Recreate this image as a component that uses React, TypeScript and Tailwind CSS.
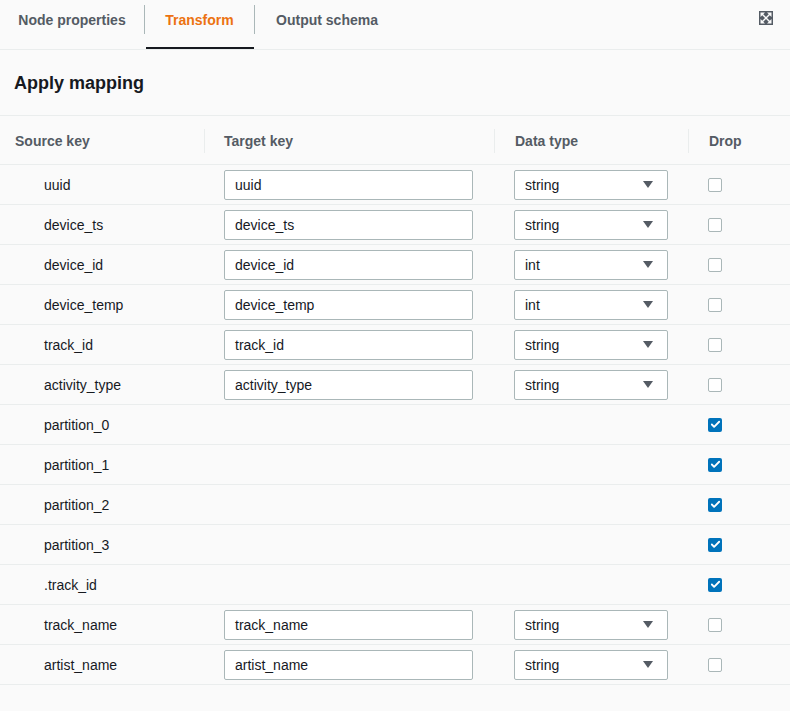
import { Check } from "lucide-react";

type Row = {
  source: string;
  target?: string;
  type?: string;
  drop: boolean;
};

const ROWS: Row[] = [
  { source: "uuid", target: "uuid", type: "string", drop: false },
  { source: "device_ts", target: "device_ts", type: "string", drop: false },
  { source: "device_id", target: "device_id", type: "int", drop: false },
  { source: "device_temp", target: "device_temp", type: "int", drop: false },
  { source: "track_id", target: "track_id", type: "string", drop: false },
  { source: "activity_type", target: "activity_type", type: "string", drop: false },
  { source: "partition_0", drop: true },
  { source: "partition_1", drop: true },
  { source: "partition_2", drop: true },
  { source: "partition_3", drop: true },
  { source: ".track_id", drop: true },
  { source: "track_name", target: "track_name", type: "string", drop: false },
  { source: "artist_name", target: "artist_name", type: "string", drop: false },
];

function ExpandIcon() {
  return (
    <svg width="14" height="14" viewBox="0 0 14 14">
      <rect x="0" y="0" width="14" height="14" fill="#545b64" />
      <g stroke="#fafafa" strokeWidth="1.4" fill="none">
        <line x1="3" y1="3" x2="11" y2="11" />
        <line x1="11" y1="3" x2="3" y2="11" />
      </g>
      <g fill="#fafafa">
        <polygon points="1.5,1.5 6,1.5 1.5,6" />
        <polygon points="12.5,1.5 8,1.5 12.5,6" />
        <polygon points="1.5,12.5 6,12.5 1.5,8" />
        <polygon points="12.5,12.5 8,12.5 12.5,8" />
      </g>
    </svg>
  );
}

function Checkbox({ checked }: { checked: boolean }) {
  if (checked) {
    return (
      <span className="flex h-[14px] w-[14px] items-center justify-center rounded-[2px] bg-[#0073bb]">
        <Check className="h-[11px] w-[11px] text-white" strokeWidth={4} />
      </span>
    );
  }
  return <span className="block h-[14px] w-[14px] rounded-[2px] border border-[#aab7b8] bg-white" />;
}

function Tab({ label, active, width }: { label: string; active?: boolean; width: string }) {
  return (
    <div className={`relative flex h-full justify-center pt-[9px] ${width}`}>
      <span
        className={`text-[14px] font-bold leading-[22px] ${active ? "text-[#ec7211]" : "text-[#545b64]"}`}
      >
        {label}
      </span>
      {active && <span className="absolute bottom-0 left-px right-0 h-[2px] bg-[#16191f]" />}
    </div>
  );
}

export default function App() {
  return (
    <div
      className="min-h-[711px] w-[790px] bg-[#fafafa] text-[#16191f]"
      style={{ fontFamily: '"Liberation Sans", Arial, sans-serif' }}
    >
      <div className="flex h-[50px] items-start border-b border-[#eaeded]">
        <Tab label="Node properties" width="w-[144px]" />
        <div className="mt-[5px] h-[29px] w-px bg-[#aab7b8]" />
        <Tab label="Transform" active width="w-[109px]" />
        <div className="mt-[5px] h-[29px] w-px bg-[#aab7b8]" />
        <Tab label="Output schema" width="w-[144px]" />
        <div className="ml-auto mr-[17px] mt-[11px]">
          <ExpandIcon />
        </div>
      </div>

      <div className="flex h-[66px] items-center border-b border-[#eaeded] pl-[14px] pt-[1px]">
        <h2 className="text-[18px] font-bold leading-[22px]">Apply mapping</h2>
      </div>

      <div className="grid h-[49px] grid-cols-[204px_290px_194px_1fr] items-center border-b border-[#eaeded] pt-[2px] text-[14px] font-bold text-[#545b64]">
        <div className="pl-[15px]">Source key</div>
        <div className="flex h-[24px] items-center border-l border-[#eaeded] pl-[19px]">Target key</div>
        <div className="flex h-[24px] items-center border-l border-[#eaeded] pl-[20px]">Data type</div>
        <div className="flex h-[24px] items-center border-l border-[#eaeded] pl-[20px]">Drop</div>
      </div>

      {ROWS.map((row) => (
        <div
          key={row.source}
          className="grid h-[40px] grid-cols-[204px_290px_194px_1fr] items-center border-b border-[#eaeded] text-[14px]"
        >
          <div className="pl-[44px] pt-[2px]">{row.source}</div>
          <div className="pl-[20px] pr-[21px]">
            {row.target && (
              <div className="flex h-[30px] items-center rounded-[2px] border border-[#aab7b8] bg-white pl-[10px] pt-[2px]">
                {row.target}
              </div>
            )}
          </div>
          <div className="pl-[20px] pr-[20px]">
            {row.type && (
              <div className="flex h-[30px] items-center justify-between rounded-[2px] border border-[#aab7b8] bg-white pl-[10px] pr-[14px]">
                <span className="pt-[2px]">{row.type}</span>
                <svg width="10" height="7" viewBox="0 0 10 7">
                  <polygon points="0,0 10,0 5,7" fill="#545b64" />
                </svg>
              </div>
            )}
          </div>
          <div className="pl-[20px]">
            <Checkbox checked={row.drop} />
          </div>
        </div>
      ))}
    </div>
  );
}
